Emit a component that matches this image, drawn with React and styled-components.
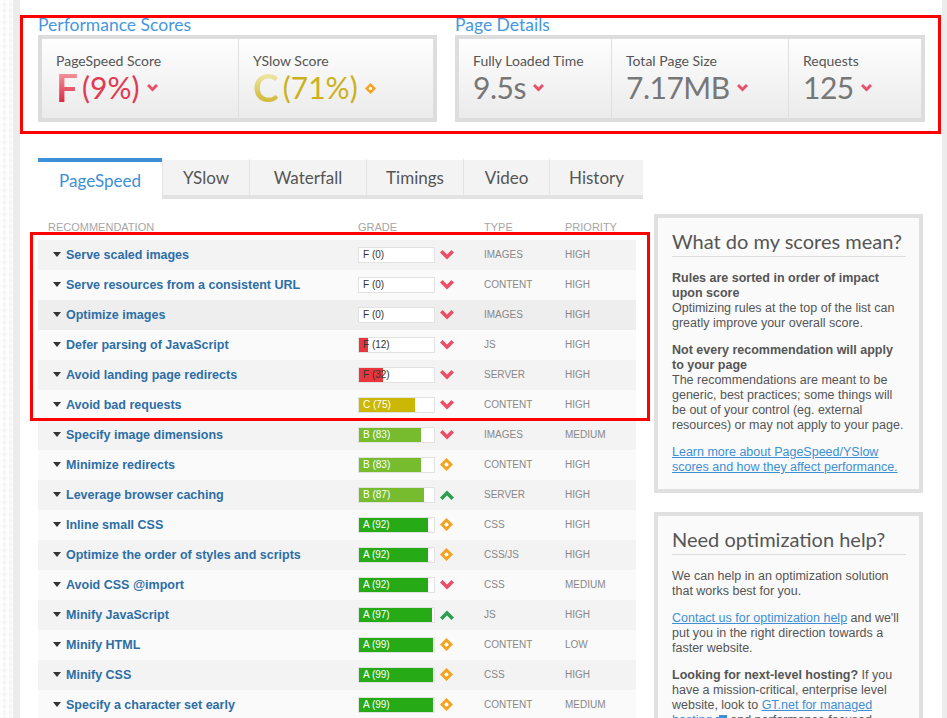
import React from "react";
import styled, { createGlobalStyle } from "styled-components";

const GlobalStyle = createGlobalStyle`
  html, body {
    margin: 0;
    height: 718px;
    overflow: hidden;
    background: #fff;
    font-family: "Liberation Sans", Arial, sans-serif;
  }
  * { box-sizing: border-box; }
`;

const HEAD_FONT = `Lato, "Open Sans", sans-serif`;

const rows = [
  { name: "Serve scaled images", grade: "F", score: 0, trend: "down", type: "IMAGES", priority: "HIGH" },
  { name: "Serve resources from a consistent URL", grade: "F", score: 0, trend: "down", type: "CONTENT", priority: "HIGH" },
  { name: "Optimize images", grade: "F", score: 0, trend: "down", type: "IMAGES", priority: "HIGH", hover: true },
  { name: "Defer parsing of JavaScript", grade: "F", score: 12, trend: "down", type: "JS", priority: "HIGH" },
  { name: "Avoid landing page redirects", grade: "F", score: 32, trend: "down", type: "SERVER", priority: "HIGH" },
  { name: "Avoid bad requests", grade: "C", score: 75, trend: "down", type: "CONTENT", priority: "HIGH" },
  { name: "Specify image dimensions", grade: "B", score: 83, trend: "down", type: "IMAGES", priority: "MEDIUM" },
  { name: "Minimize redirects", grade: "B", score: 83, trend: "same", type: "CONTENT", priority: "HIGH" },
  { name: "Leverage browser caching", grade: "B", score: 87, trend: "up", type: "SERVER", priority: "HIGH" },
  { name: "Inline small CSS", grade: "A", score: 92, trend: "same", type: "CSS", priority: "HIGH" },
  { name: "Optimize the order of styles and scripts", grade: "A", score: 92, trend: "same", type: "CSS/JS", priority: "HIGH" },
  { name: "Avoid CSS @import", grade: "A", score: 92, trend: "down", type: "CSS", priority: "MEDIUM" },
  { name: "Minify JavaScript", grade: "A", score: 97, trend: "up", type: "JS", priority: "HIGH" },
  { name: "Minify HTML", grade: "A", score: 99, trend: "same", type: "CONTENT", priority: "LOW" },
  { name: "Minify CSS", grade: "A", score: 99, trend: "same", type: "CSS", priority: "HIGH" },
  { name: "Specify a character set early", grade: "A", score: 99, trend: "same", type: "CONTENT", priority: "MEDIUM" },
];

const gradeColors = {
  F: "#e8363c",
  C: "#cbb805",
  B: "#77bc2f",
  A: "#26aa16",
};

const tabs = [
  { label: "PageSpeed", w: 124, active: true },
  { label: "YSlow", w: 87 },
  { label: "Waterfall", w: 117 },
  { label: "Timings", w: 97 },
  { label: "Video", w: 86 },
  { label: "History", w: 94 },
];

const ChevronDown = ({ w = 14, h = 10 }) => (
  <svg width={w} height={h} viewBox="0 0 14 10">
    <polygon points="0,2.6 2.6,0 7,4.4 11.4,0 14,2.6 7,9.6" fill="#ea4f66" />
  </svg>
);

const ChevronUp = () => (
  <svg width="14" height="10" viewBox="0 0 14 10">
    <polygon points="0,7.4 2.6,10 7,5.6 11.4,10 14,7.4 7,0.4" fill="#2f9e4e" />
  </svg>
);

const Diamond = ({ s = 13 }) => (
  <svg width={s} height={s} viewBox="0 0 13 13">
    <polygon points="6.5,0 13,6.5 6.5,13 0,6.5" fill="#f5a21e" />
    <circle cx="6.5" cy="6.5" r="2" fill="#fff" />
  </svg>
);

const ExternalIcon = () => (
  <svg width="11" height="10" viewBox="0 0 11 10">
    <rect x="0.5" y="2.5" width="7" height="7" fill="none" stroke="#3d8fd6" />
    <rect x="3" y="0" width="8" height="6" fill="#3d8fd6" />
  </svg>
);

const TrendIcon = ({ trend }) => {
  if (trend === "down") return <ChevronDown />;
  if (trend === "up") return <ChevronUp />;
  return <Diamond />;
};

export default function App() {
  return (
    <>
      <GlobalStyle />
      <Page>
        <LeftRail />
        <Main>
          <TopSection>
            <div>
              <SectionTitle>Performance Scores</SectionTitle>
              <ScorePanel>
                <ScoreCell $w={196}>
                  <ScoreLabel>PageSpeed Score</ScoreLabel>
                  <ScoreValue>
                    <GradeLetter $from="#f7a3ab" $to="#d6203a">F</GradeLetter>
                    <Percent $color="#e23a50">(9%)</Percent>
                    <ChevronDown w={11} h={8} />
                  </ScoreValue>
                </ScoreCell>
                <ScoreCell $w={195}>
                  <ScoreLabel>YSlow Score</ScoreLabel>
                  <ScoreValue>
                    <GradeLetter $from="#f4efb8" $to="#cbb42a">C</GradeLetter>
                    <Percent $color="#ccb11b">(71%)</Percent>
                    <Diamond s={11} />
                  </ScoreValue>
                </ScoreCell>
              </ScorePanel>
            </div>
            <div>
              <SectionTitle>Page Details</SectionTitle>
              <ScorePanel>
                <ScoreCell $w={152}>
                  <ScoreLabel>Fully Loaded Time</ScoreLabel>
                  <ScoreValue>
                    <Metric>9.5s</Metric>
                    <ChevronDown w={11} h={8} />
                  </ScoreValue>
                </ScoreCell>
                <ScoreCell $w={177}>
                  <ScoreLabel>Total Page Size</ScoreLabel>
                  <ScoreValue>
                    <Metric>7.17MB</Metric>
                    <ChevronDown w={11} h={8} />
                  </ScoreValue>
                </ScoreCell>
                <ScoreCell $w={133}>
                  <ScoreLabel>Requests</ScoreLabel>
                  <ScoreValue>
                    <Metric>125</Metric>
                    <ChevronDown w={11} h={8} />
                  </ScoreValue>
                </ScoreCell>
              </ScorePanel>
            </div>
          </TopSection>

          <Lower>
            <ReportColumn>
              <TabBar>
                {tabs.map((t) => (
                  <Tab key={t.label} $w={t.w} $active={t.active}>
                    {t.label}
                  </Tab>
                ))}
              </TabBar>
              <HeaderRow>
                <HeadCell $pad={10}>Recommendation</HeadCell>
                <HeadCell>Grade</HeadCell>
                <HeadCell />
                <HeadCell>Type</HeadCell>
                <HeadCell>Priority</HeadCell>
              </HeaderRow>
              <Highlight>
                {rows.slice(0, 6).map((r, i) => (
                  <RuleRow key={r.name} row={r} index={i} />
                ))}
              </Highlight>
              {rows.slice(6).map((r, i) => (
                <RuleRow key={r.name} row={r} index={i + 6} />
              ))}
            </ReportColumn>

            <Sidebar>
              <InfoBox>
                <InfoTitle>What do my scores mean?</InfoTitle>
                <InfoText>
                  <strong>Rules are sorted in order of impact upon score</strong>
                  Optimizing rules at the top of the list can greatly improve your overall score.
                </InfoText>
                <InfoText>
                  <strong>Not every recommendation will apply to your page</strong>
                  The recommendations are meant to be generic, best practices; some things will be out
                  of your control (eg. external resources) or may not apply to your page.
                </InfoText>
                <InfoText>
                  <InfoLink href="#">
                    Learn more about PageSpeed/YSlow scores and how they affect performance.
                  </InfoLink>
                </InfoText>
              </InfoBox>
              <InfoBox>
                <InfoTitle>Need optimization help?</InfoTitle>
                <InfoText>We can help in an optimization solution that works best for you.</InfoText>
                <InfoText>
                  <InfoLink href="#">Contact us for optimization help</InfoLink> and we'll put you in
                  the right direction towards a faster website.
                </InfoText>
                <InfoText>
                  <b>Looking for next-level hosting?</b> If you have a mission-critical, enterprise level
                  website, look to <InfoLink href="#">GT.net for managed hosting</InfoLink>{" "}
                  <ExternalIcon /> and performance focused solutions.
                </InfoText>
              </InfoBox>
            </Sidebar>
          </Lower>
        </Main>
        <RightRail />
      </Page>
    </>
  );
}

const RuleRow = ({ row, index }) => (
  <Row $odd={index % 2 === 0} $hover={row.hover}>
    <NameCell>
      <Caret />
      {row.name}
    </NameCell>
    <GradeBar>
      <GradeFill $color={gradeColors[row.grade]} style={{ width: `${row.score}%` }} />
      <GradeText $light={row.grade !== "F"}>
        {row.grade} ({row.score})
      </GradeText>
    </GradeBar>
    <IconCell>
      <TrendIcon trend={row.trend} />
    </IconCell>
    <SmallCell>{row.type}</SmallCell>
    <SmallCell>{row.priority}</SmallCell>
  </Row>
);

const Page = styled.div`
  display: flex;
  height: 718px;
`;

const LeftRail = styled.div`
  width: 20px;
  flex-shrink: 0;
  border-right: 7px solid #ececec;
  background-color: #f5f5f5;
  background-image: linear-gradient(90deg, rgba(255, 255, 255, 0.7) 50%, transparent 50%),
    linear-gradient(rgba(255, 255, 255, 0.5) 50%, transparent 50%);
  background-size: 6px 6px;
`;

const RightRail = styled.div`
  width: 5px;
  flex-shrink: 0;
  background: #ececec;
`;

const Main = styled.div`
  flex: 1;
  padding-top: 15px;
  background: #fff;
`;

const TopSection = styled.section`
  width: 921px;
  border: 3px solid #ff0000;
  padding: 0 0 9px 15px;
  display: grid;
  grid-template-columns: 399px 470px;
  column-gap: 18px;
`;

const SectionTitle = styled.h2`
  margin: 0;
  height: 17px;
  font-family: ${HEAD_FONT};
  font-weight: 400;
  font-size: 17.5px;
  line-height: 13px;
  color: #4597e0;
  white-space: nowrap;
`;

const ScorePanel = styled.div`
  display: flex;
  height: 87px;
  border: 4px solid #dddddd;
  background: linear-gradient(#fefefe, #ebebeb);
`;

const ScoreCell = styled.div`
  width: ${(p) => p.$w}px;
  padding: 14px 0 0 14px;
  & + & {
    border-left: 1px solid #e0e0e0;
  }
`;

const ScoreLabel = styled.div`
  font-family: ${HEAD_FONT};
  font-size: 14px;
  line-height: 16px;
  color: #555;
`;

const ScoreValue = styled.div`
  display: flex;
  align-items: center;
  height: 36px;
  svg {
    margin-left: 7px;
    margin-top: 2px;
  }
`;

const GradeLetter = styled.span`
  font-family: ${HEAD_FONT};
  font-weight: 700;
  font-size: 39px;
  line-height: 36px;
  background: linear-gradient(${(p) => p.$from}, ${(p) => p.$to});
  -webkit-background-clip: text;
  background-clip: text;
  color: transparent;
  margin-right: 4px;
`;

const Percent = styled.span`
  font-family: ${HEAD_FONT};
  font-size: 30px;
  line-height: 36px;
  color: ${(p) => p.$color};
`;

const Metric = styled.span`
  font-family: ${HEAD_FONT};
  font-size: 30px;
  line-height: 36px;
  color: #777;
  letter-spacing: -0.5px;
`;

const Lower = styled.div`
  display: flex;
  align-items: flex-start;
  gap: 11px;
  margin-top: 24px;
  padding-left: 18px;
`;

const ReportColumn = styled.div`
  width: 605px;
`;

const TabBar = styled.div`
  display: flex;
`;

const Tab = styled.div`
  width: ${(p) => p.$w}px;
  height: 41px;
  display: flex;
  align-items: center;
  justify-content: center;
  font-family: ${HEAD_FONT};
  font-size: 17px;
  color: ${(p) => (p.$active ? "#3d8fd8" : "#555")};
  background: ${(p) => (p.$active ? "#fff" : "#f3f3f3")};
  border-top: ${(p) => (p.$active ? "4px solid #3d8fd8" : "2px solid #fff")};
  border-bottom: ${(p) => (p.$active ? "0" : "4px solid #e2e2e2")};
  & + & {
    border-left: ${(p) => (p.$active ? "0" : "1px solid #e3e3e3")};
  }
`;

const ROW_COLUMNS = "320px 82px 44px 81px 1fr";

const HeaderRow = styled.div`
  display: grid;
  grid-template-columns: ${ROW_COLUMNS};
  width: 598px;
  height: 41px;
  align-items: end;
  padding-bottom: 7px;
`;

const HeadCell = styled.div`
  padding-left: ${(p) => p.$pad || 0}px;
  font-size: 11px;
  line-height: 12px;
  color: #a6a6a6;
  text-transform: uppercase;
`;

const Highlight = styled.div`
  position: relative;
  &::after {
    content: "";
    position: absolute;
    top: -8px;
    left: -8px;
    right: -7px;
    bottom: -1px;
    border: 3px solid #ff0000;
    pointer-events: none;
  }
`;

const Row = styled.div`
  display: grid;
  grid-template-columns: ${ROW_COLUMNS};
  align-items: center;
  width: 598px;
  height: 30px;
  padding-bottom: 1px;
  background: ${(p) => (p.$hover ? "#eeeeee" : p.$odd ? "#f3f3f3" : "#fafafa")};
`;

const NameCell = styled.div`
  display: flex;
  align-items: center;
  padding-left: 15px;
  font-size: 12.5px;
  font-weight: 700;
  color: #2d6ea6;
  white-space: nowrap;
`;

const Caret = styled.span`
  width: 0;
  height: 0;
  border-left: 4px solid transparent;
  border-right: 4px solid transparent;
  border-top: 5px solid #333;
  margin-right: 5px;
`;

const GradeBar = styled.div`
  display: grid;
  width: 77px;
  height: 16px;
  border: 1px solid #e2e2e2;
  background: #fff;
  & > * {
    grid-area: 1 / 1;
  }
`;

const GradeFill = styled.div`
  height: 100%;
  background: ${(p) => p.$color};
`;

const GradeText = styled.span`
  padding-left: 4px;
  font-size: 10px;
  line-height: 14px;
  color: ${(p) => (p.$light ? "#fff" : "#333")};
`;

const IconCell = styled.div`
  display: flex;
  align-items: center;
`;

const SmallCell = styled.div`
  font-size: 10px;
  color: #888;
`;

const Sidebar = styled.aside`
  width: 269px;
  margin-top: 56px;
  display: flex;
  flex-direction: column;
  gap: 19px;
`;

const InfoBox = styled.div`
  border: 4px solid #e0e0e0;
  background: #fafafa;
  padding: 10px 13px 14px 14px;
`;

const InfoTitle = styled.h3`
  margin: 0 0 14px;
  padding-bottom: 2px;
  border-bottom: 1px solid #dddddd;
  font-family: ${HEAD_FONT};
  font-weight: 400;
  font-size: 20px;
  line-height: 26px;
  color: #555;
  white-space: nowrap;
`;

const InfoText = styled.p`
  margin: 0 0 12px;
  font-size: 12.5px;
  line-height: 15px;
  color: #555;
  strong {
    display: block;
  }
  svg {
    vertical-align: -1px;
  }
  &:last-child {
    margin-bottom: 0;
  }
`;

const InfoLink = styled.a`
  color: #3d8fd6;
  text-decoration: underline;
`;
